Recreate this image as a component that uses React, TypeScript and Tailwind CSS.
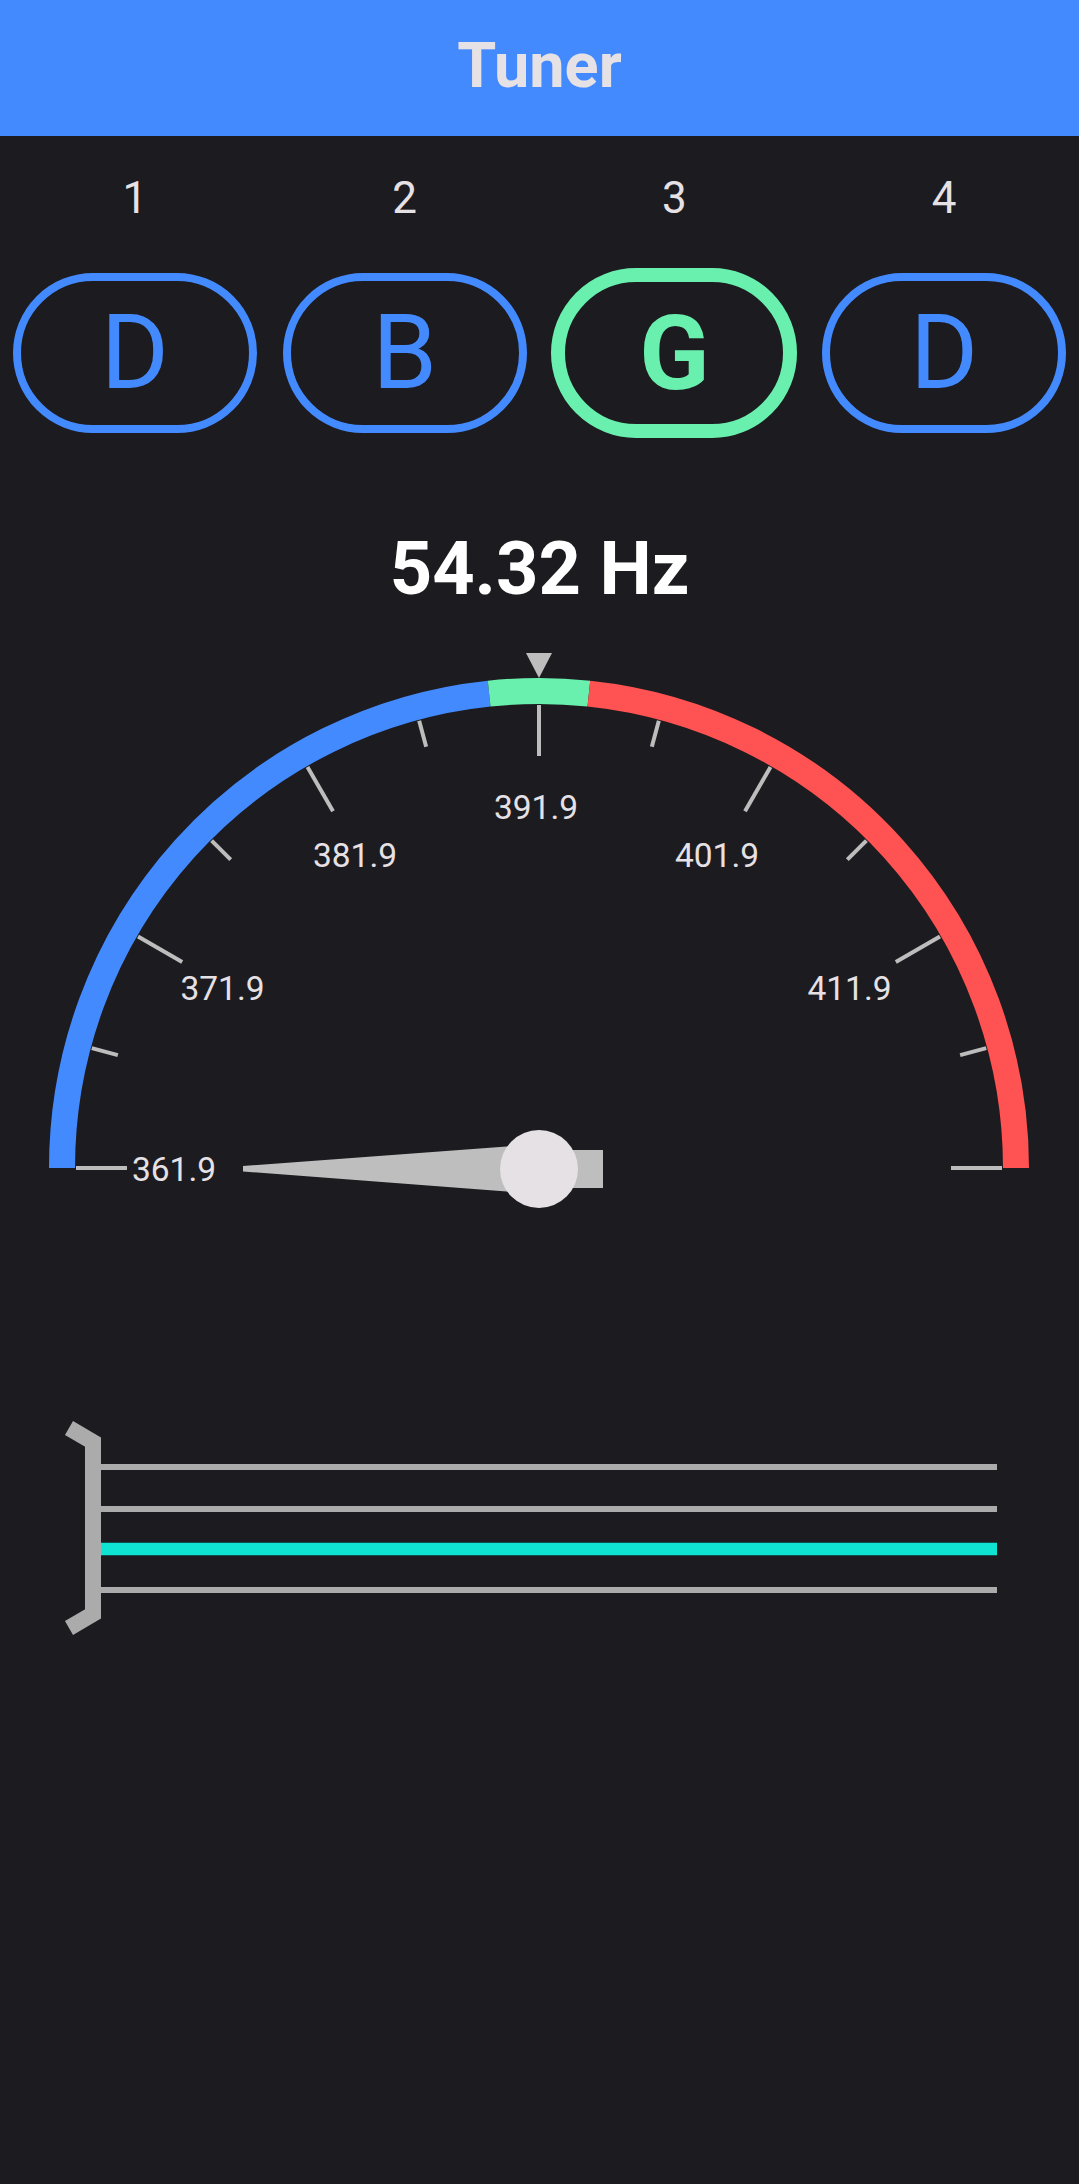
const CX = 539;
const CY = 1168;
const R = 477;

const strings = [
  { label: '1', note: 'D', active: false },
  { label: '2', note: 'B', active: false },
  { label: '3', note: 'G', active: true },
  { label: '4', note: 'D', active: false },
];

function pt(deg: number, r: number, cy = CY) {
  const a = (deg * Math.PI) / 180;
  return { x: CX + r * Math.cos(a), y: cy - r * Math.sin(a) };
}

function arc(from: number, to: number) {
  const a = pt(from, R);
  const b = pt(to, R);
  return `M ${a.x} ${a.y} A ${R} ${R} 0 0 1 ${b.x} ${b.y}`;
}

function Gauge() {
  const ticks = Array.from({ length: 13 }, (_, i) => i);
  const labels = ['361.9', '371.9', '381.9', '391.9', '401.9', '411.9'];

  return (
    <svg className="block w-[1079px] h-[600px]" viewBox="0 640 1079 600">
      {/* scale band */}
      <path d={arc(180, 96)} fill="none" stroke="#448aff" strokeWidth={26} />
      <path d={arc(96, 84)} fill="none" stroke="#69f0ae" strokeWidth={26} />
      <path d={arc(84, 0)} fill="none" stroke="#ff5252" strokeWidth={26} />

      {ticks.map((i) => {
        const deg = 180 - i * 15;
        const major = i % 2 === 0;
        const a = pt(deg, 463);
        const b = pt(deg, major ? 412 : 436);
        return <line key={i} x1={a.x} y1={a.y} x2={b.x} y2={b.y} stroke="#bdbdbd" strokeWidth={4} />;
      })}

      {labels.map((l, i) => {
        const p = pt(180 - i * 30, 362, 1169);
        return (
          <text key={l} x={p.x - 3} y={p.y} fill="#e6e1e5" fontSize={33.5} textAnchor="middle" dominantBaseline="central">
            {l}
          </text>
        );
      })}

      {/* target marker */}
      <polygon points="526,653 552,653 539,678" fill="#bdbdbd" />

      {/* needle */}
      <polygon points="243,1166 243,1171.5 539,1194 539,1144" fill="#bebebe" />
      <rect x={539} y={1150} width={64} height={38} fill="#bebebe" />
      <circle cx={539} cy={1169} r={39} fill="#e6e1e5" />
    </svg>
  );
}

function Strings() {
  return (
    <svg className="block w-[1079px] h-[420px]" viewBox="0 1240 1079 420">
      <polyline
        points="69,1428 93,1442 93,1614 69,1628"
        fill="none"
        stroke="#ababab"
        strokeWidth={16}
        strokeLinejoin="miter"
      />
      <rect x={101} y={1464} width={896} height={6} fill="#ababab" />
      <rect x={101} y={1506} width={896} height={6} fill="#ababab" />
      <rect x={101} y={1542} width={896} height={14} fill="#12504d" />
      <rect x={101} y={1543} width={896} height={12} fill="#0fe3d2" />
      <rect x={101} y={1587} width={896} height={6} fill="#ababab" />
    </svg>
  );
}

export default function App() {
  return (
    <div className="min-h-screen w-full bg-[#1c1b1f] font-['Roboto','Liberation_Sans',sans-serif]">
      {/* Top bar */}
      <div className="h-[136px] bg-[#448aff] flex items-center justify-center pb-[6px]">
        <h1 className="text-[63px] leading-none font-bold text-[#e6e1e5]">Tuner</h1>
      </div>

      {/* String numbers */}
      <div className="mt-[40px] grid grid-cols-4 h-[44px]">
        {strings.map((s) => (
          <div key={s.label} className="text-center text-[44px] leading-[44px] text-[#e6e1e5]">
            {s.label}
          </div>
        ))}
      </div>

      {/* Note buttons */}
      <div className="mt-[48px] grid grid-cols-4 h-[170px]">
        {strings.map((s, i) =>
          s.active ? (
            <div key={i} className="flex items-center justify-center">
              <div className="w-[246px] h-[170px] rounded-full border-[14px] border-[#69f0ae] flex items-center justify-center text-[103px] leading-none font-bold text-[#69f0ae]">
                {s.note}
              </div>
            </div>
          ) : (
            <div key={i} className="flex items-center justify-center">
              <div className="w-[244px] h-[160px] rounded-full border-[8px] border-[#448aff] flex items-center justify-center text-[104px] leading-none text-[#448aff]">
                {s.note}
              </div>
            </div>
          ),
        )}
      </div>

      {/* Frequency */}
      <div className="mt-[94px] h-[74px] text-center text-[74px] leading-[74px] font-bold text-white">54.32 Hz</div>

      <div className="mt-[34px]">
        <Gauge />
      </div>

      <Strings />
    </div>
  );
}
